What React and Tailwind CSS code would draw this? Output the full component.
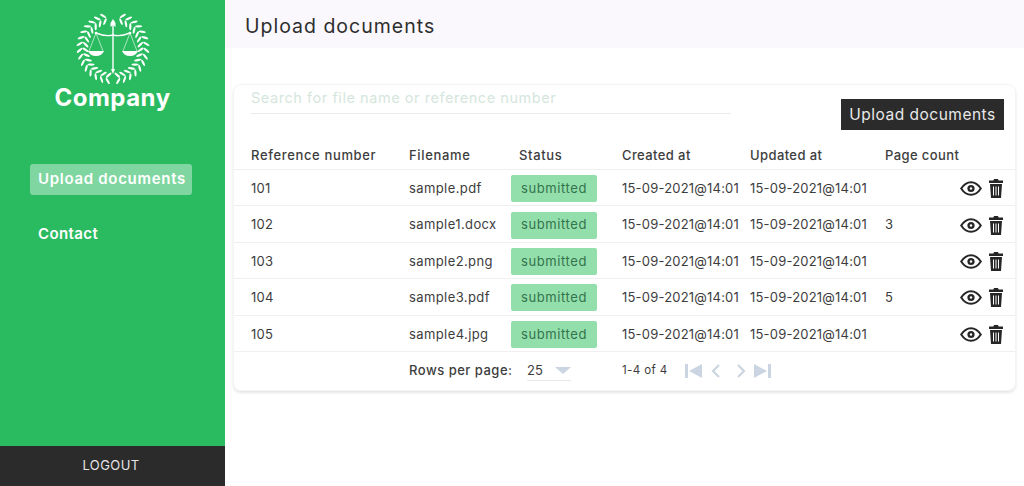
const font = { fontFamily: '"Inter", "Open Sans", sans-serif' };

const rows = [
  { id: "101", name: "sample.pdf", pages: "" },
  { id: "102", name: "sample1.docx", pages: "3" },
  { id: "103", name: "sample2.png", pages: "" },
  { id: "104", name: "sample3.pdf", pages: "5" },
  { id: "105", name: "sample4.jpg", pages: "" },
];

const cols = "grid grid-cols-[158px_102px_111px_128px_135px_1fr] pl-[17px] pr-3 items-center";

// laurel leaves, two rows per side, running from the top gap down to the stem crossing
const Wreath = () => {
  const leaves = [];
  for (let i = 0; i < 15; i++) {
    const a = 17 + i * 11;
    [-1, 1].forEach((side) => {
      const rad = (a * Math.PI) / 180;
      [-1, 1].forEach((layer) => {
        const r = 30.5 + layer * 3;
        const x = 36 + side * r * Math.sin(rad);
        const y = 36 - r * Math.cos(rad);
        leaves.push(
          <ellipse
            key={`${i}${side}${layer}`}
            cx={x}
            cy={y}
            rx="1.1"
            ry="3.6"
            fill="white"
            transform={`rotate(${side * (a + layer * 38)} ${x} ${y})`}
          />,
        );
      });
    });
  }
  return leaves;
};

const Logo = () => (
  <svg width="74" height="72" viewBox="0 0 72 72" className="block">
    <Wreath />
    <path d="M36 9 V60" stroke="white" strokeWidth="1.4" />
    <path d="M33.5 11 L36 7 L38.5 11 L38.5 15 L36 13 L33.5 15Z M34 57 H38 L36 62Z" fill="white" />
    <path d="M19 21 Q29 25 36 23 Q43 25 53 21" stroke="white" strokeWidth="1.4" fill="none" />
    <path d="M19 21 L12 39 M19 21 L26 39 M53 21 L46 39 M53 21 L60 39" stroke="white" strokeWidth="0.6" />
    <path d="M11 39 H27 Q25 44 19 44 Q13 44 11 39Z M45 39 H61 Q59 44 53 44 Q47 44 45 39Z" fill="white" />
    <circle cx="19" cy="21" r="1.3" fill="white" />
    <circle cx="53" cy="21" r="1.3" fill="white" />
  </svg>
);

const Eye = () => (
  <svg width="22" height="15" viewBox="0 0 22 15">
    <path d="M1.2 7.5 C4 3.2 7.4 1.2 11 1.2 C14.6 1.2 18 3.2 20.8 7.5 C18 11.8 14.6 13.8 11 13.8 C7.4 13.8 4 11.8 1.2 7.5Z" fill="none" stroke="#262626" strokeWidth="2" />
    <circle cx="11" cy="7.5" r="3.6" fill="#262626" />
    <circle cx="11" cy="7.5" r="1.2" fill="white" />
  </svg>
);

const Trash = () => (
  <svg width="14" height="19" viewBox="0 0 14 19" fill="#262626">
    <path d="M5 0 H9 L9.6 1.6 H14 V4 H0 V1.6 H4.4Z" />
    <path d="M1 5 H13 L12 19 H2Z M4 7.5 V16.5 H5 V7.5Z M6.5 7.5 V16.5 H7.5 V7.5Z M9 7.5 V16.5 H10 V7.5Z" fillRule="evenodd" />
  </svg>
);

const PagerIcon = ({ d, fill }) => (
  <svg width="18" height="16" viewBox="0 0 18 16" fill={fill ? "#cbd5e1" : "none"} stroke={fill ? "none" : "#cbd5e1"} strokeWidth="2.2">
    <path d={d} />
  </svg>
);

export default function App() {
  return (
    <div className="flex h-[486px] w-[1024px] overflow-hidden bg-white text-[#333]" style={font}>
      <aside className="flex w-[225px] shrink-0 flex-col bg-[#2abb60] text-white">
        <div className="flex flex-col items-center pt-[12px]">
          <Logo />
          <div className="text-[24px] font-bold leading-[28px] tracking-[0.5px]">Company</div>
        </div>
        <nav className="mt-[52px] flex-1 pl-[30px] text-[15px] font-semibold">
          <div className="flex h-[31px] w-[162px] items-center whitespace-nowrap rounded-[3px] bg-[#7fd6a0] pl-2 tracking-[0.7px]">
            Upload documents
          </div>
          <div className="mt-[24px] pl-2 leading-[30px] tracking-[0.4px]">Contact</div>
        </nav>
        <div className="flex h-[40px] items-center justify-center bg-[#2b2b2b] pr-[3px] text-[13px] tracking-[0.4px] text-[#e5e5e5]">
          LOGOUT
        </div>
      </aside>

      <main className="min-w-0 flex-1">
        <header className="flex h-[48px] items-center bg-[#faf8fc] pl-[20px] pt-[5px] text-[19.5px] font-normal tracking-[1px] text-[#2e2e2e]">
          Upload documents
        </header>

        <section className="ml-2 mr-2 mt-[36px] h-[307px] rounded-lg border border-[#f4f4f4] shadow-[0_2px_3px_rgba(0,0,0,0.1)]">
          <div className="flex items-start justify-between pl-[17px] pr-[11px]">
            <div className="w-[480px] border-b border-[#ececec] pb-[4px] pt-[2px] text-[14.5px] leading-[22px] tracking-[0.55px] text-[#d5e6dc]">
              Search for file name or reference number
            </div>
            <button className="mt-[14px] h-[31px] w-[163px] whitespace-nowrap bg-[#2b2b2b] text-[15.5px] tracking-[0.5px] text-[#e8e8e8]">
              Upload documents
            </button>
          </div>

          <div className={`${cols} mt-[11px] h-[29px] border-b border-[#f0f0f0] pt-[2px] text-[13px] font-medium tracking-[0.65px] text-[#3d3d3d]`}>
            <div>Reference number</div>
            <div>Filename</div>
            <div className="pl-2">Status</div>
            <div className="tracking-[0.4px]">Created at</div>
            <div className="tracking-[0.4px]">Updated at</div>
            <div className="tracking-[0.4px]">Page count</div>
          </div>

          {rows.map((row) => (
            <div key={row.id} className={`${cols} h-[36.4px] border-b border-[#f0f0f0] pt-[2px] text-[13px] tracking-[0.2px] text-[#3d3d3d]`}>
              <div>{row.id}</div>
              <div className="tracking-[0.4px]">{row.name}</div>
              <div>
                <span className="flex h-[27px] w-[86px] items-center justify-center rounded-[2px] bg-[#93dfab] tracking-[0.6px] text-[#33734d]">
                  submitted
                </span>
              </div>
              <div className="whitespace-nowrap">15-09-2021@14:01</div>
              <div className="whitespace-nowrap">15-09-2021@14:01</div>
              <div className="flex items-center justify-between">
                <span>{row.pages}</span>
                <span className="flex items-center gap-[7px] text-[#262626]">
                  <Eye />
                  <Trash />
                </span>
              </div>
            </div>
          ))}

          <div className="flex h-[38px] items-center pl-[175px] text-[13px] text-[#3d3d3d]">
            <span className="w-[118px] font-medium tracking-[0.5px]">Rows per page:</span>
            <span className="flex w-[44px] items-center justify-between border-b border-[#e5e7eb] leading-[20px]">
              25
              <span className="h-0 w-0 border-x-[8px] border-t-[7px] border-x-transparent border-t-[#cbd5e1]" />
            </span>
            <span className="ml-[51px] w-[63px] whitespace-nowrap text-[11.5px] tracking-[0.4px]">1-4 of 4</span>
            <span className="flex items-center gap-[5px]">
              <PagerIcon fill d="M0 1 H3 V15 H0Z M17 1 V15 L4 8Z" />
              <PagerIcon d="M11 2 L5 8 L11 14" />
              <PagerIcon d="M7 2 L13 8 L7 14" />
              <PagerIcon fill d="M0 1 L13 8 L0 15Z M14 1 H17 V15 H14Z" />
            </span>
          </div>
        </section>
      </main>
    </div>
  );
}
